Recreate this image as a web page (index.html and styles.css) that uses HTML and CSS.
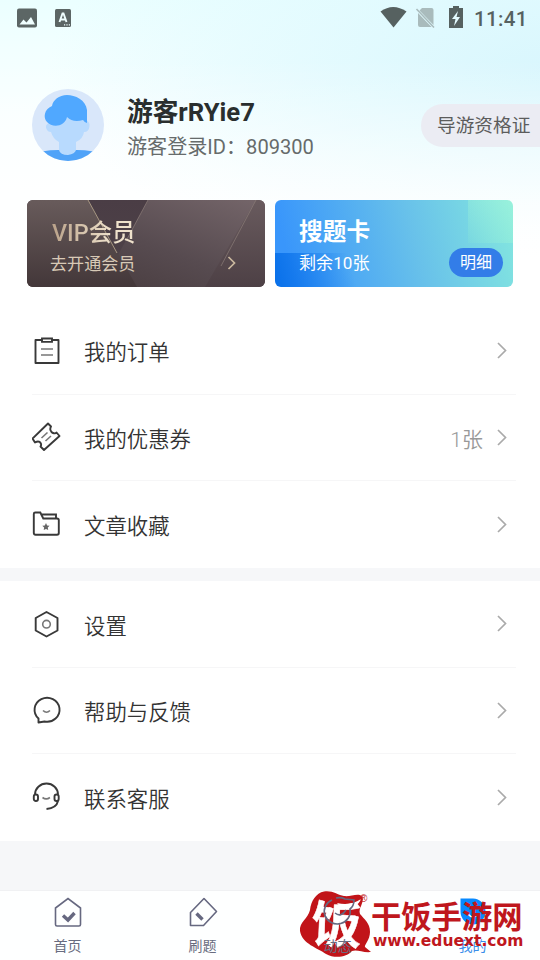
FILE: index.html
```html
<!DOCTYPE html>
<html lang="zh-CN">
<head>
<meta charset="utf-8">
<title>我的</title>
<link rel="stylesheet" href="styles.css">
</head>
<body>
<div class="app">
  <header class="hero">
    <div class="status">
      <svg class="st-left" width="80" height="36" viewBox="0 0 80 36">
        <rect x="17" y="8.500" width="20" height="19" rx="2" fill="#5c6665"/>
        <path d="M19.500 24.500l4-5 3 3 4.500-5.500 4 7.500z" fill="#f0ffff"/>
        <rect x="55" y="9" width="16" height="18" rx="1.500" fill="#5c6665"/>
        <path d="M59.500 22l3-8.500h1l3 8.500M60.500 19.500h5" fill="none" stroke="#f0ffff" stroke-width="1.900"/>
        <path d="M64 24.800h6" stroke="#f0ffff" stroke-width="1.200" stroke-dasharray="1.200 1.200"/>
      </svg>
      <div class="st-right">
        <svg width="90" height="36" viewBox="376 0 90 36">
          <path d="M380.500 11.500Q393 2.500 406.500 11.500L393.500 27.500z" fill="#566160"/>
          <path d="M422 8h9.500q2 0 2 2v15L419.500 10.500zM418 13v12q0 2 2 2h11.500z" fill="#a9bbbc"/>
          <path d="M416.500 9l17.500 18.500" stroke="#a9bbbc" stroke-width="1.600"/>
          <path d="M453 6h6v2h4v20h-14V8h4z" fill="#566160"/>
          <path d="M458 11l-6 8h3.500l-1.500 7 6-9h-3.500z" fill="#e5fbff"/>
        </svg>
        <span class="clock">11:41</span>
      </div>
    </div>
    <div class="profile">
      <svg class="avatar" width="72" height="72" viewBox="0 0 72 72">
        <defs><clipPath id="round"><circle cx="36" cy="36" r="36"/></clipPath></defs>
        <g clip-path="url(#round)">
          <rect width="72" height="72" fill="#d9e7fa"/>
          <path d="M0 66Q10 61 26 61H45Q61 61 72 66V72H0z" fill="#50a3f8"/>
          <path d="M17 34Q12 36 15 41Q16 43 19 43Q21 50 27 53V61Q28 66 36 66Q43 65 44 61V53Q51 50 52 43Q57 43 57.500 37Q58 33 54 31V24H17z" fill="#b8dafe"/>
          <path d="M55 34V21C54 11 43 6 35 6C27 6 21 11 20 17C12 20 11 29 15 33C20 39 33 38 35 28Q41 34 51 31Q53 34 55 34z" fill="#50a8ff"/>
        </g>
      </svg>
      <div class="identity">
        <h1>游客rRYie7</h1>
        <p>游客登录ID：809300</p>
      </div>
      <div class="cert">导游资格证</div>
    </div>
    <div class="cards">
      <section class="card vip">
        <svg class="card-bg" width="238" height="87" viewBox="0 0 238 87">
          <defs>
            <linearGradient id="v1" x1="0" y1="1" x2="1" y2="0"><stop offset="0" stop-color="#433739"/><stop offset=".5" stop-color="#574b50"/><stop offset="1" stop-color="#75666a"/></linearGradient>
            <linearGradient id="v2" x1="0" y1="0" x2="0" y2="1"><stop stop-color="#685b5b"/><stop offset="1" stop-color="#433739"/></linearGradient>
            <linearGradient id="v3" x1="0" y1="0" x2="0" y2="1"><stop stop-color="#4a3d45"/><stop offset="1" stop-color="#4d4147"/></linearGradient>
            <linearGradient id="v4" x1="0" y1="0" x2="0" y2="1"><stop stop-color="#695b5e"/><stop offset="1" stop-color="#4d4045"/></linearGradient>
          </defs>
          <path d="M0 0H238V87H0z" fill="url(#v1)"/>
          <path d="M0 0H61L110 87H0z" fill="url(#v2)"/>
          <path d="M61 0H121L91 55z" fill="url(#v3)"/>
          <path d="M229 0H238V87H178z" fill="url(#v4)"/>
          <path d="M61 0L90 53" stroke="#a79782" stroke-width="1"/>
          <path d="M121 0L99 41M229 0L194 66" stroke="#8b7c78" stroke-width=".7"/>
        </svg>
        <h2>VIP会员</h2>
        <p>去开通会员</p>
        <svg class="vip-arrow" width="9" height="14" viewBox="0 0 9 14"><path d="M1.500 1l6 6-6 6" fill="none" stroke="#cbb99f" stroke-width="1.700"/></svg>
      </section>
      <section class="card search">
        <h2>搜题卡</h2>
        <p>剩余10张</p>
        <span class="detail">明细</span>
      </section>
    </div>
  </header>

  <main>
    <div class="group">
      <div class="row">
        <svg class="ico" width="30" height="30" viewBox="0 0 30 30"><path d="M10 4H3.500v23h23V4H20" stroke-linejoin="round"/><path d="M10 2.500h10v3.400H10z"/><path d="M9 13h12M9 19h12" class="thin"/></svg>
        <span class="label">我的订单</span>
        <svg class="chev" width="10" height="17" viewBox="0 0 10 17"><path d="M1 1l7.500 7.500L1 16"/></svg>
      </div>
      <div class="row">
        <svg class="ico" width="30" height="30" viewBox="0 0 30 30"><path d="M16 1.500l3 3c-1.500 2.500-.5 5.500 2 6.500 1.500.6 3 .3 3.500-.5l3 3.500-15.500 14-3.500-3.500c1.500-2 0-5-2.500-5-1.500 0-2 .5-3 1l-2.500-4z" stroke-linejoin="round"/><path d="M9.500 16l6-5.500M13.500 19l5.500-5" class="thin"/></svg>
        <span class="label">我的优惠券</span><span class="count">1张</span>
        <svg class="chev" width="10" height="17" viewBox="0 0 10 17"><path d="M1 1l7.500 7.500L1 16"/></svg>
      </div>
      <div class="row">
        <svg class="ico" width="30" height="30" viewBox="0 0 30 30"><path d="M1.800 5q0-1.500 1.500-1.500h5l3 6H25q1.800 0 1.800 1.700V24q0 1.700-1.800 1.700H3.500Q1.800 25.700 1.800 24z"/><path d="M10 5.500h14v4"/><path d="M14 14l1.100 2.400 2.500.3-1.800 1.800.4 2.600-2.200-1.200-2.300 1.200.4-2.600-1.800-1.800 2.500-.3z" class="star"/></svg>
        <span class="label">文章收藏</span>
        <svg class="chev" width="10" height="17" viewBox="0 0 10 17"><path d="M1 1l7.500 7.500L1 16"/></svg>
      </div>
    </div>
    <div class="group second">
      <div class="row">
        <svg class="ico" width="30" height="30" viewBox="0 0 30 30"><path d="M14.500 3l11 6v12.500l-11 6-10.800-6V9z" stroke-linejoin="round"/><circle cx="14.500" cy="15.200" r="3.800" class="thin"/></svg>
        <span class="label">设置</span>
        <svg class="chev" width="10" height="17" viewBox="0 0 10 17"><path d="M1 1l7.500 7.500L1 16"/></svg>
      </div>
      <div class="row">
        <svg class="ico" width="30" height="30" viewBox="0 0 30 30"><path d="M6.500 27.500V23.500A12.500 12 0 1 1 12.500 26.500z" stroke-linejoin="round"/><path d="M11 15.500q3.500 3.500 7 0" class="thin"/></svg>
        <span class="label">帮助与反馈</span>
        <svg class="chev" width="10" height="17" viewBox="0 0 10 17"><path d="M1 1l7.500 7.500L1 16"/></svg>
      </div>
      <div class="row">
        <svg class="ico" width="30" height="30" viewBox="0 0 30 30"><path d="M3 12.500a11.500 11 0 0 1 23 0M26 19q-1.500 7-11.500 8"/><rect x="1.800" y="12.500" width="4.200" height="6.500" rx="2"/><rect x="22.500" y="12.500" width="4.200" height="6.500" rx="2"/><path d="M10.500 15.500q3.700 2.800 7.400 0" class="thin"/></svg>
        <span class="label">联系客服</span>
        <svg class="chev" width="10" height="17" viewBox="0 0 10 17"><path d="M1 1l7.500 7.500L1 16"/></svg>
      </div>
    </div>
  </main>

  <nav class="tabs">
    <div class="tab">
      <svg width="32" height="34" viewBox="0 0 32 34"><path d="M3.500 13L16 3.500 28.500 13v16.500q0 1.500-1.500 1.500H5q-1.500 0-1.500-1.500z"/><path d="M11 20.500l5 4.500 6.500-7" class="bold"/></svg>
      <span>首页</span>
    </div>
    <div class="tab">
      <svg width="32" height="34" viewBox="0 0 32 34"><path d="M3.500 17.500L17 3.500 29.500 16.500 16.500 30.500H3.500z" stroke-linejoin="round"/><path d="M9.500 18.500l6 6" class="bold"/></svg>
      <span>刷题</span>
    </div>
    <div class="tab over">
      <svg width="32" height="34" viewBox="0 0 32 34"><path d="M10 5a13 12.500 0 1 0 18 9q4-3 4-9l-9-1q-4-2-9-1"/><path d="M13 18q6 5 11-3"/></svg>
      <span>动态</span>
    </div>
    <div class="tab active">
      <svg width="32" height="34" viewBox="0 0 32 34"><path d="M3.500 3.500H16a12.500 13 0 1 1-12.500 13z" class="fill"/><path d="M11 19q5 6 10 0" stroke="#fff"/></svg>
      <span>我的</span>
    </div>
  </nav>

  <div class="brand">
    <svg class="seal" width="76" height="70" viewBox="0 0 76 70">
      <path d="M25 1.500C33 0 39 5 45 6C52 7 60 2 63.500 7C65 14 59 18 61 24C65 29 71 33 71 42C71 50 65 55 66 57L72 62C64 63 58 59 53 61C48 67 36 69 27 64C19 58 3 54 1 41C0 32 9 29 11 20C12 11 17 3 25 1.500z" fill="#c11419"/>
      <path d="M38 13Q52 16 62 9Q59 18 43 19z" fill="#fff"/>
      <text x="0" y="0" transform="matrix(1 .07 -.04 .98 12 51)" class="seal-text">饭</text>
    </svg>
    <span class="reg">®</span>
    <div class="brand-words"><strong>干饭手游网</strong><b>www.eduext.com</b></div>
  </div>
</div>
</body>
</html>
```
FILE: styles.css
```css
* { box-sizing: border-box; }
body, h1, h2, p { margin: 0; }
body { background: #f6f7f9; font-family: Roboto, "Noto Sans CJK SC", sans-serif; color: #333; }
.app { position: relative; width: 540px; height: 960px; overflow: hidden; display: flex; flex-direction: column; background: #f6f7f9; }
.hero {
  height: 308px;
  background:
    linear-gradient(180deg, rgba(255,255,255,0) 60px, #fff 260px),
    radial-gradient(ellipse at 105% 24%, #d8f6fd 0, rgba(222,249,254,.75) 30%, rgba(244,255,255,0) 65%),
    linear-gradient(180deg, #ebffff 0, #f2ffff 50px, #f8ffff 110px, #fff 250px);
}
.status { height: 36px; display: flex; justify-content: space-between; }
.status svg { display: block; }
.st-right { display: flex; width: 164px; }
.clock { margin-left: 8px; font-size: 20.500px; line-height: 38px; font-weight: 500; letter-spacing: .35px; color: #566160; }
.profile { height: 72px; margin: 53px 0 0 32px; display: flex; }
.identity { margin-left: 23px; padding-top: 5px; }
h1 { font-size: 25.700px; line-height: 36px; font-weight: 700; color: #292e2e; white-space: nowrap; }
.identity p { font-size: 20.100px; line-height: 34px; color: #666b6b; white-space: nowrap; }
.cert { margin: 15px 0 0 auto; width: 119px; height: 43px; padding-left: 16px; border-radius: 22px 0 0 22px; background: #ebecf3; color: #5c5c5c; font-size: 18.700px; line-height: 45px; white-space: nowrap; }
.cards { display: flex; gap: 10px; margin: 39px 27px 0; }
.card { position: relative; width: 238px; height: 86.500px; border-radius: 6px; overflow: hidden; padding: 15px 0 0 24px; }
.card-bg { position: absolute; left: 0; top: 0; }
.card h2, .card p { position: relative; white-space: nowrap; }
.card h2 { font-size: 23.700px; line-height: 34px; font-weight: 700; }
.card p { font-size: 17.100px; line-height: 28px; }
.vip h2 { margin-left: 1px; font-size: 23.400px; line-height: 37px; font-weight: 500; color: transparent; background: linear-gradient(90deg, #baa28a, #efe2cc 60px); background-clip: text; }
.vip p { margin: -2px 0 0 -1px; color: #d8c9b6; }
.vip-arrow { position: absolute; right: 29px; top: 56px; }
.search {
  color: #fff;
  background:
    linear-gradient(45deg, rgba(139,235,205,.15), rgba(164,247,218,.65)) right top / 45px 43px no-repeat,
    linear-gradient(75deg, rgba(0,105,230,.85), rgba(30,140,240,0) 75%) left bottom / 100px 34px no-repeat,
    linear-gradient(75deg, #3996fb 8%, #68c1ea 58%, #84e7df);
}
.detail { position: absolute; right: 10px; bottom: 10px; width: 54px; height: 29px; border-radius: 15px; text-align: center; font-size: 16px; line-height: 30px; background: #337de8; }
.group { background: #fff; padding: 0 24px 0 32px; }
.second { margin-top: 13px; }
.row { height: 86.660px; display: flex; align-items: center; border-bottom: 1.500px solid #f6f6f7; padding-right: 9px; }
.row:last-child { border-color: transparent; }
.ico { flex: none; fill: none; stroke: #393939; stroke-width: 1.900; }
.thin { stroke: #777; stroke-width: 1.600; }
.ico .star { fill: #666; stroke: none; }
.label { margin-left: 22px; padding-top: 5px; font-size: 21.400px; line-height: 32px; font-weight: 350; }
.count { margin-left: auto; padding-top: 5px; color: #999; font-size: 21px; line-height: 32px; font-weight: 350; }
.chev { margin-left: auto; fill: none; stroke: #aaa; stroke-width: 1.700; }
.count + .chev { margin-left: 14px; }
.second .label { padding-top: 6px; }
.tabs { margin-top: auto; height: 70px; display: flex; background: #feffff; border-top: 1px solid #f0f1f3; }
.tab { flex: 1; display: flex; flex-direction: column; align-items: center; padding-top: 4px; color: #686c80; font-size: 14px; line-height: 22px; }
.tab svg { fill: none; stroke: #666880; stroke-width: 1.600; margin-bottom: 7px; overflow: visible; }
.tab span { margin-top: -1px; }
.tab .bold { stroke-width: 3.400; }
.tab .fill { fill: #0789ff; stroke: none; }
.over { position: relative; z-index: 3; }
.active { color: #398eea; }
.brand { position: absolute; z-index: 2; left: 299px; top: 890px; width: 241px; height: 70px; display: flex; color: #bf171d; }
.seal { flex: none; overflow: visible; }
.seal-text { fill: #fff; font-family: "Noto Sans CJK SC", sans-serif; font-size: 50px; font-weight: 700; stroke: #fff; stroke-width: .5; }
.reg { position: absolute; left: 61px; top: 3px; font: 10px "Liberation Sans", sans-serif; }
.brand-words { display: flex; flex-direction: column; margin-left: -4px; padding-top: 6px; }
.brand strong { font: 700 30.300px/38px "Noto Sans CJK SC", sans-serif; white-space: nowrap; }
.brand b { font: 700 15.500px/16px "DejaVu Sans", sans-serif; margin: -1px 0 0 2px; white-space: nowrap; }
```
